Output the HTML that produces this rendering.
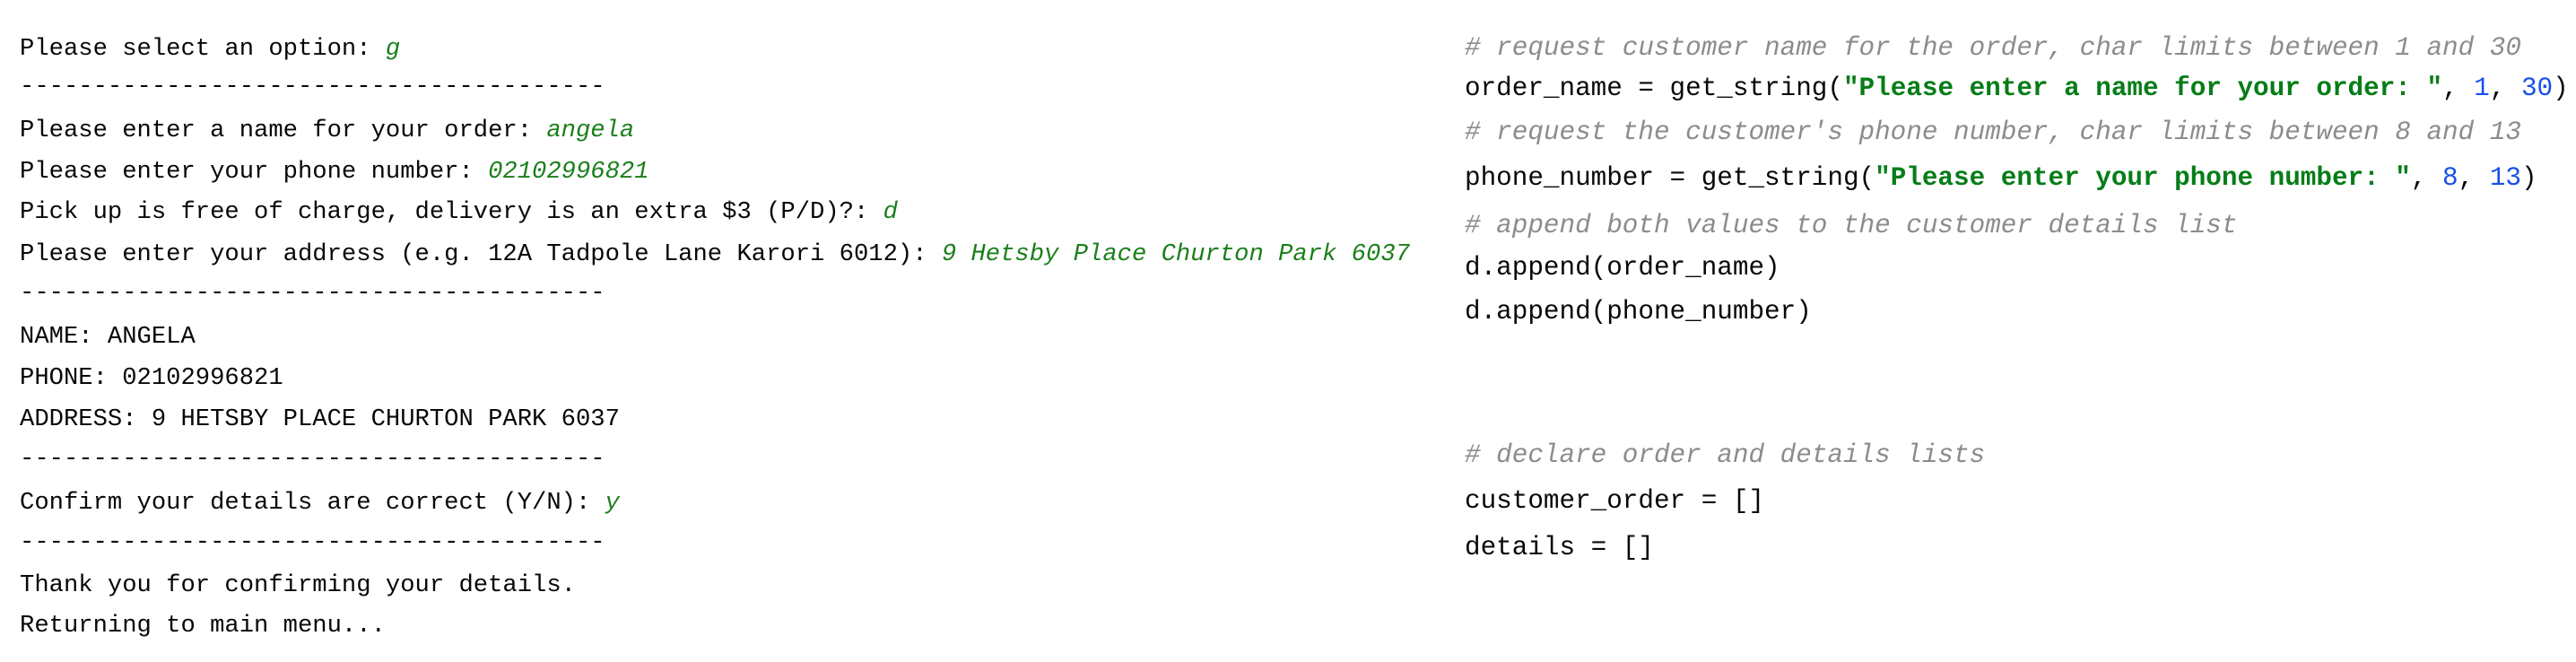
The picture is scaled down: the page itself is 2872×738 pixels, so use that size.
<!DOCTYPE html>
<html><head><meta charset="utf-8"><style>
html,body{margin:0;padding:0;background:#fff;width:2872px;height:738px;overflow:hidden}
.l,.r{position:absolute;font-family:"Liberation Mono",monospace;color:#080808;white-space:pre}
.l{left:22px;font-size:27.2px}
.r{left:1633px;font-size:29.3px}
.i{color:#1a7f1a;font-style:italic}
.c{color:#8c8c8c;font-style:italic}
.s{color:#067d17;font-weight:bold}
.n{color:#1750eb}
</style></head><body>
<div class="l" style="top:39px">Please select an option: <span class="i">g</span></div>
<div class="l" style="top:81px">----------------------------------------</div>
<div class="l" style="top:130px">Please enter a name for your order: <span class="i">angela</span></div>
<div class="l" style="top:176px">Please enter your phone number: <span class="i">02102996821</span></div>
<div class="l" style="top:221px">Pick up is free of charge, delivery is an extra $3 (P/D)?: <span class="i">d</span></div>
<div class="l" style="top:268px">Please enter your address (e.g. 12A Tadpole Lane Karori 6012): <span class="i">9 Hetsby Place Churton Park 6037</span></div>
<div class="l" style="top:311px">----------------------------------------</div>
<div class="l" style="top:360px">NAME: ANGELA</div>
<div class="l" style="top:406px">PHONE: 02102996821</div>
<div class="l" style="top:452px">ADDRESS: 9 HETSBY PLACE CHURTON PARK 6037</div>
<div class="l" style="top:496px">----------------------------------------</div>
<div class="l" style="top:545px">Confirm your details are correct (Y/N): <span class="i">y</span></div>
<div class="l" style="top:589px">----------------------------------------</div>
<div class="l" style="top:637px">Thank you for confirming your details.</div>
<div class="l" style="top:682px">Returning to main menu...</div>

<div class="r c" style="top:37px"># request customer name for the order, char limits between 1 and 30</div>
<div class="r" style="top:82px">order_name = get_string(<span class="s">"Please enter a name for your order: "</span>, <span class="n">1</span>, <span class="n">30</span>)</div>
<div class="r c" style="top:131px"># request the customer's phone number, char limits between 8 and 13</div>
<div class="r" style="top:182px">phone_number = get_string(<span class="s">"Please enter your phone number: "</span>, <span class="n">8</span>, <span class="n">13</span>)</div>
<div class="r c" style="top:235px"># append both values to the customer details list</div>
<div class="r" style="top:282px">d.append(order_name)</div>
<div class="r" style="top:331px">d.append(phone_number)</div>
<div class="r c" style="top:491px"># declare order and details lists</div>
<div class="r" style="top:542px">customer_order = []</div>
<div class="r" style="top:594px">details = []</div>
</body></html>
